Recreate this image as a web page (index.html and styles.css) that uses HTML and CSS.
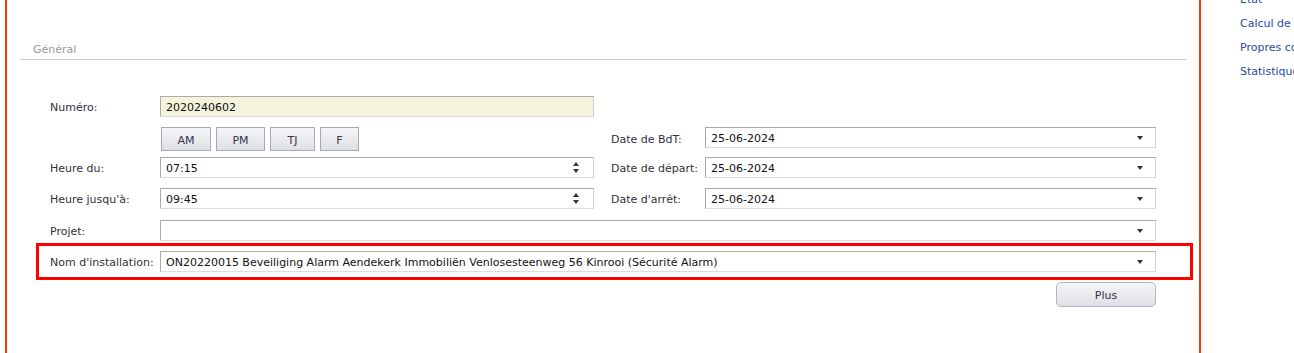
FILE: index.html
```html
<!DOCTYPE html>
<html>
<head>
<title>Général</title>
<link rel="stylesheet" href="styles.css">
</head>
<body>
<div class="page">
	<div class="main">
		<div class="section">
			<div class="legend">Général</div>

			<div class="form">
				<!-- numero -->
				<div class="row r1">
					<label class="lbl">Numéro:</label>
					<div class="field field-ro"><span>2020240602</span></div>
				</div>

				<div class="row r2">
					<span></span>
					<div class="btns">
						<button class="bttn b-am" type="button">AM</button>
						<button class="bttn b-pm" type="button">PM</button>
						<button class="bttn b-tj" type="button">TJ</button>
						<button class="bttn b-f" type="button">F</button>
					</div>
					<span></span>
					<label class="lbl">Date de BdT:</label>
					<div class="field"><span>25-06-2024</span><i class="caret"></i></div>
				</div>

				<div class="row r3">
					<label class="lbl">Heure du:</label>
					<div class="field"><span>07:15</span><i class="spin"><b class="up"></b><b class="down"></b></i></div>
					<span></span>
					<label class="lbl">Date de départ:</label>
					<div class="field"><span>25-06-2024</span><i class="caret"></i></div>
				</div>

				<div class="row r4">
					<label class="lbl">Heure jusqu'à:</label>
					<div class="field"><span>09:45</span><i class="spin"><b class="up"></b><b class="down"></b></i></div>
					<span></span>
					<label class="lbl">Date d'arrêt:</label>
					<div class="field"><span>25-06-2024</span><i class="caret"></i></div>
				</div>

				<div class="row row-wide r5">
					<label class="lbl">Projet:</label>
					<div class="field"><span></span><i class="caret"></i></div>
				</div>

				<div class="row row-wide row-mark">
					<label class="lbl">Nom d'installation:</label>
					<div class="field"><span>ON20220015 Beveiliging Alarm Aendekerk Immobiliën Venlosesteenweg 56 Kinrooi (Sécurité Alarm)</span><i class="caret"></i></div>
				</div>

				<div class="row-plus">
					<button class="bttn bttn-plus" type="button">Plus</button>
				</div>
			</div>
		</div>
	</div>

	<ul class="side">
		<li><a href="#">Etat</a></li>
		<li><a href="#">Calcul de</a></li>
		<li><a href="#">Propres coûts</a></li>
		<li><a href="#">Statistiques</a></li>
	</ul>
</div>
</body>
</html>
```

FILE: styles.css
```css
html,body{margin:0;padding:0;background:#fff;}
body{font-family:"DejaVu Sans",Verdana,sans-serif;font-size:11px;color:#33303a;overflow:hidden;}
.page{display:flex;align-items:flex-start;height:353px;}

.main{margin-left:5px;width:1192px;height:353px;border-left:2px solid #ef3a10;border-right:2px solid #ef3a10;flex:none;}
.section{margin:0 13px;padding-top:43px;}
.legend{color:#9a9a9a;line-height:14px;padding:0 0 2px 13px;border-bottom:1px solid #c8c8c8;}

.form{margin:36px 0 0 16px;width:1157px;}
.row{display:grid;grid-template-columns:110px 434px 17px 94px 451px;align-items:center;padding:0 37px 0 14px;height:21px;}
.row-wide{grid-template-columns:110px 996px;}
.r1{margin-bottom:10px;}
.r2{height:24px;margin-bottom:6px;align-items:start;}
.r2 .lbl{line-height:21px;}
.r3{margin-bottom:10px;}
.r4{margin-bottom:11px;}
.r5{margin-bottom:2px;}
.row-mark{border:3px solid #ff0000;padding:5px 34px 5px 11px;margin-bottom:2px;}

.lbl{white-space:nowrap;padding-top:2px;}

.field{box-sizing:border-box;height:21px;border:1px solid;border-color:#aaa #cfcfcf #dcdcdc #aaa;background:#fff;display:flex;align-items:center;justify-content:space-between;padding:0 12px 0 5px;color:#111;white-space:nowrap;overflow:hidden;}
.field span{padding-top:2px;}
.field-ro{background:#f4f4dc;}
.caret{width:0;height:0;border-left:3.5px solid transparent;border-right:3.5px solid transparent;border-top:4px solid #333;margin-top:1px;}
.spin{display:flex;flex-direction:column;gap:3px;margin-right:2px;}
.spin b{width:0;height:0;border-left:3.5px solid transparent;border-right:3.5px solid transparent;}
.spin .up{border-bottom:4px solid #333;}
.spin .down{border-top:4px solid #333;}

.btns{display:flex;gap:5px;padding-left:1px;}
.bttn{font-family:"DejaVu Sans",Verdana,sans-serif;font-size:11px;color:#35334d;height:24px;border:1px solid #a9a9b2;background:linear-gradient(#f4f5f7,#dfe0e5);padding:2px 0 0;cursor:pointer;}
.b-am{width:50px;}
.b-pm{width:49px;}
.b-tj{width:45px;}
.b-f{width:39px;}

.row-plus{display:flex;justify-content:flex-end;padding-right:37px;}
.bttn-plus{width:100px;height:25px;border-radius:5px;border-color:#b4b4bc;}

.side{list-style:none;margin:-12px 0 0 39px;padding:0;line-height:24px;white-space:nowrap;}
.side a{color:#2c4c9c;text-decoration:none;}
```
